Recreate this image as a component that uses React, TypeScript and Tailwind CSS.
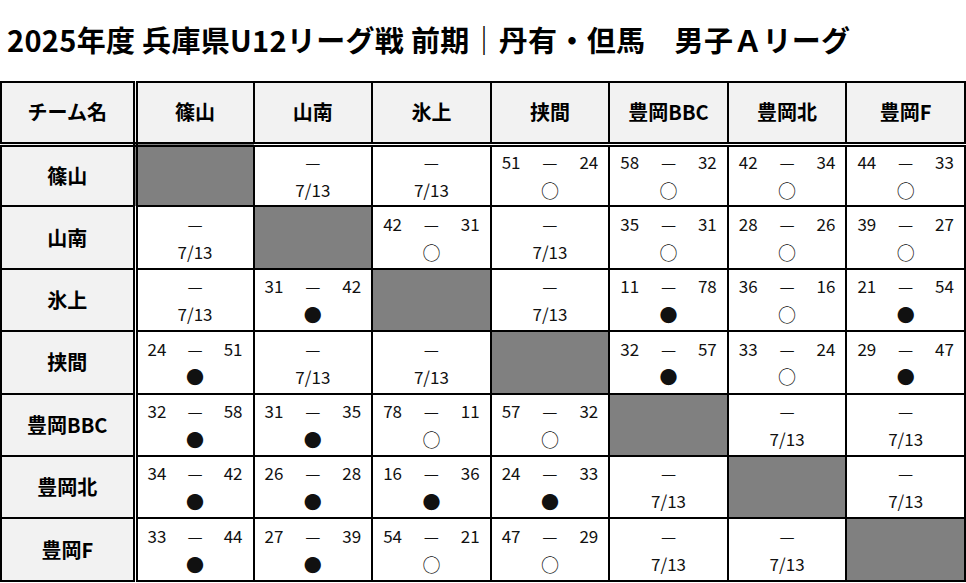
const teams = ["篠山", "山南", "氷上", "挟間", "豊岡BBC", "豊岡北", "豊岡F"];

// "x" = 同チーム, "7/13" = 未消化(日程), "51-24" = 結果
const results: string[][] = [
  ["x", "7/13", "7/13", "51-24", "58-32", "42-34", "44-33"],
  ["7/13", "x", "42-31", "7/13", "35-31", "28-26", "39-27"],
  ["7/13", "31-42", "x", "7/13", "11-78", "36-16", "21-54"],
  ["24-51", "7/13", "7/13", "x", "32-57", "33-24", "29-47"],
  ["32-58", "31-35", "78-11", "57-32", "x", "7/13", "7/13"],
  ["34-42", "26-28", "16-36", "24-33", "7/13", "x", "7/13"],
  ["33-44", "27-39", "54-21", "47-29", "7/13", "7/13", "x"],
];

const jp = { fontFamily: '"Noto Sans CJK JP", sans-serif' };
const num = { fontFamily: '"Liberation Sans Narrow", "Noto Sans CJK JP", sans-serif' };

function ResultCell({ value }: { value: string }) {
  if (value === "x") {
    return <td className="border-2 border-black bg-[#808080]" />;
  }
  if (!value.includes("-")) {
    return (
      <td className="border-2 border-black bg-white p-0 text-[17px] text-[#111]" style={num}>
        <div className="flex h-7 items-center justify-center">—</div>
        <div className="flex h-7 items-center justify-center">{value}</div>
      </td>
    );
  }
  const [a, b] = value.split("-").map(Number);
  return (
    <td className="border-2 border-black bg-white p-0 text-[17px] text-[#111]" style={num}>
      <div className="grid h-7 grid-cols-3 items-center px-[10px]">
        <span className="text-left">{a}</span>
        <span className="text-center">—</span>
        <span className="text-right">{b}</span>
      </div>
      <div className="flex h-7 items-center justify-center text-[18px] leading-none" style={jp}>
        {a > b ? "○" : "●"}
      </div>
    </td>
  );
}

export default function App() {
  return (
    <div className="w-[966px] bg-white text-black" style={jp}>
      <div className="flex h-[81px] items-center pb-[3px] pl-[7px]">
        <h1 className="text-[29px] font-bold leading-none tracking-[0.3px]">
          2025年度 兵庫県U12リーグ戦 前期｜丹有・但馬　男子Ａリーグ
        </h1>
      </div>

      <table className="w-[966px] table-fixed border-collapse">
        <colgroup>
          <col className="w-[134px]" />
          {teams.map((t) => (
            <col key={t} />
          ))}
        </colgroup>
        <thead>
          <tr className="h-[62px]">
            <th className="border-2 border-r-[5px] border-b-[5px] border-black border-double bg-[#f2f2f2] text-[20px] font-bold">
              チーム名
            </th>
            {teams.map((t) => (
              <th
                key={t}
                className="border-2 border-b-[5px] border-black border-double bg-[#f2f2f2] text-[20px] font-bold"
              >
                {t}
              </th>
            ))}
          </tr>
        </thead>
        <tbody>
          {teams.map((t, i) => (
            <tr key={t} className="h-[62.4px]">
              <th className="border-2 border-r-[5px] border-black border-double bg-[#f2f2f2] text-[20px] font-bold">
                {t}
              </th>
              {results[i].map((v, j) => (
                <ResultCell key={j} value={v} />
              ))}
            </tr>
          ))}
        </tbody>
      </table>
    </div>
  );
}
